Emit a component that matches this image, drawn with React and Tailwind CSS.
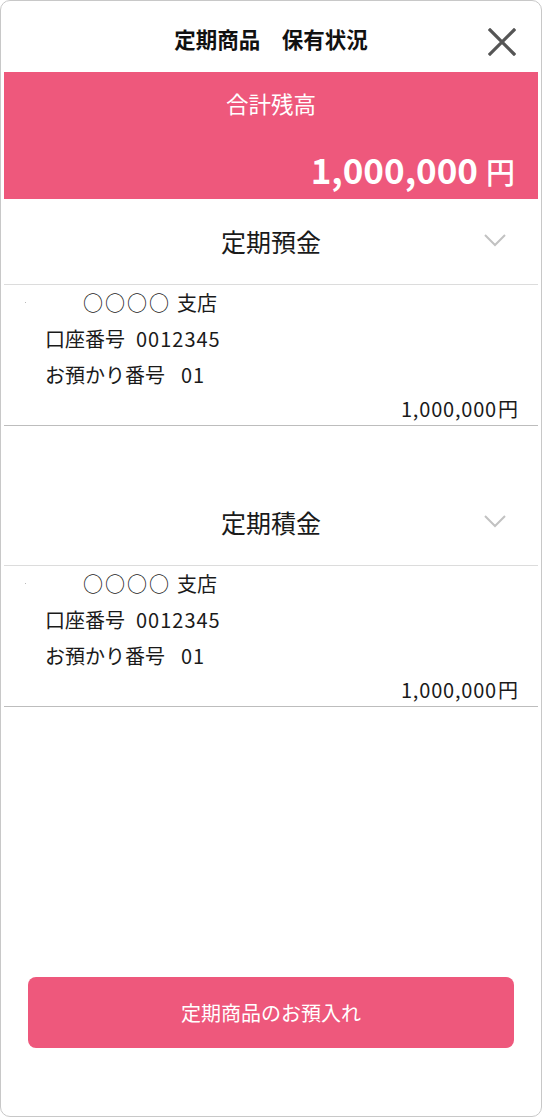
const SECTIONS = [
  { title: '定期預金', branch: '○○○○ 支店', account: '0012345', no: '01', amount: '1,000,000' },
  { title: '定期積金', branch: '○○○○ 支店', account: '0012345', no: '01', amount: '1,000,000' },
]

function Chevron() {
  return (
    <svg
      className="absolute right-[32px] top-[35px] h-[13px] w-[22px]"
      viewBox="0 0 22 13"
      fill="none"
      stroke="#c2c2c2"
      strokeWidth="2"
    >
      <path d="M1 1 L11 11 L21 1" />
    </svg>
  )
}

function Section({ s, first }) {
  return (
    <div className={first ? '' : 'mt-[54px]'}>
      <div className="relative flex h-[85px] items-center justify-center">
        <span className="text-[25px] text-[#1a1a1a]">{s.title}</span>
        <Chevron />
      </div>
      <div className="border-t border-[#dcdcdc] text-[20px] text-[#1a1a1a]">
        <div className="relative flex h-[36px] items-center pl-[79px]">
          <span className="absolute left-[21px] top-[17px] h-px w-px bg-[#bbb]" />
          <span className="tracking-[2px]">○○○○</span>
          <span className="ml-[6px]">支店</span>
        </div>
        <div className="flex h-[36px] items-center pl-[41px]">
          口座番号
          <span className="ml-[11px] tracking-[1px]">{s.account}</span>
        </div>
        <div className="flex h-[36px] items-center pl-[41px]">
          お預かり番号
          <span className="ml-[16px] tracking-[1px]">{s.no}</span>
        </div>
        <div className="flex h-[32px] items-center justify-end pr-[20px]">
          <span className="tracking-[0.8px]">{s.amount}</span>
          <span className="ml-[1px]">円</span>
        </div>
      </div>
      <div className="border-t border-[#bdbdbd]" />
    </div>
  )
}

export default function App() {
  return (
    <div
      className="h-[1117px] w-[542px] bg-white"
      style={{ fontFamily: '"Noto Sans CJK JP", "Noto Sans", sans-serif' }}
    >
      <div className="flex h-full flex-col rounded-[10px] border border-[#c8c8c8] px-[3px]">
        <header className="relative flex h-[71px] items-center justify-center pt-[6px]">
          <h1 className="text-[21.5px] font-bold text-[#111]">定期商品　保有状況</h1>
          <svg
            className="absolute right-[22px] top-[27px] h-[28px] w-[28px]"
            viewBox="0 0 28 28"
            fill="none"
            stroke="#555"
            strokeWidth="3.2"
            strokeLinecap="square"
          >
            <path d="M2 2 L26 26 M26 2 L2 26" />
          </svg>
        </header>

        <div className="flex h-[127px] flex-col bg-[#ee587c] text-white">
          <div className="pt-[15px] text-center text-[22.5px]">合計残高</div>
          <div className="mt-auto flex items-baseline justify-end pb-[13px] pr-[23px]">
            <span className="text-[35px] font-bold leading-none">1,000,000</span>
            <span className="ml-[8px] text-[29px] font-medium leading-none">円</span>
          </div>
        </div>

        {SECTIONS.map((s, i) => (
          <Section key={s.title} s={s} first={i === 0} />
        ))}

        <div className="mt-auto px-[24px] pb-[68px]">
          <button className="flex h-[71px] w-full items-center justify-center rounded-[8px] bg-[#ee587c] text-[20px] text-white">
            定期商品のお預入れ
          </button>
        </div>
      </div>
    </div>
  )
}
